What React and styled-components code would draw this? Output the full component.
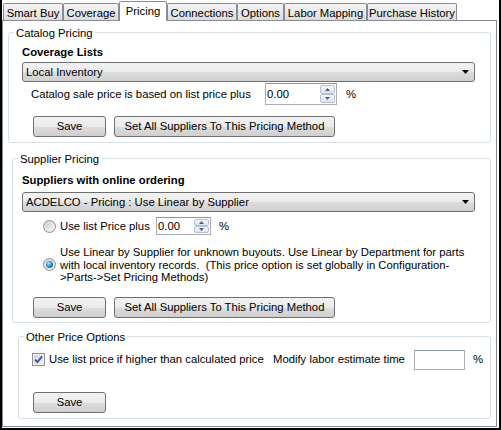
import React from "react";
import styled, { createGlobalStyle } from "styled-components";

const GlobalStyle = createGlobalStyle`
  html, body {
    margin: 0;
    padding: 0;
    background: #fff;
  }
  body {
    font-family: "Liberation Sans", Arial, sans-serif;
    font-size: 11.3px;
    line-height: 13px;
    color: #000;
  }
`;

const tabs = [
  { label: "Smart Buy", w: 60 },
  { label: "Coverage", w: 56 },
  { label: "Pricing", w: 48, active: true },
  { label: "Connections", w: 70 },
  { label: "Options", w: 47 },
  { label: "Labor Mapping", w: 83 },
  { label: "Purchase History", w: 90 },
];

const Frame = styled.div`
  box-sizing: border-box;
  width: 501px;
  height: 430px;
  border: 2px solid #000;
  border-top: none;
  background: #fff;
  display: flex;
  flex-direction: column;
`;

const TabStrip = styled.div`
  display: flex;
  align-items: flex-end;
  height: 20px;
  padding-left: 1px;
  flex-shrink: 0;
`;

const Tab = styled.div`
  box-sizing: border-box;
  width: ${(p) => p.$w}px;
  height: ${(p) => (p.$active ? 20 : 17)}px;
  margin-bottom: ${(p) => (p.$active ? -1 : 0)}px;
  padding-top: 3px;
  border: 1px solid #898c95;
  border-bottom: none;
  border-radius: 2px 2px 0 0;
  background: ${(p) =>
    p.$active ? "#fff" : "linear-gradient(#f4f4f4, #e9e9e9 50%, #dcdcdc)"};
  text-align: center;
  white-space: nowrap;
  position: relative;
  z-index: ${(p) => (p.$active ? 1 : 0)};
`;

const Panel = styled.div`
  box-sizing: border-box;
  width: 495px;
  height: 407px;
  border: 1px solid #898c95;
  background: #fff;
  display: flex;
  flex-direction: column;
`;

const Group = styled.fieldset`
  box-sizing: border-box;
  width: ${(p) => p.$w}px;
  min-width: 0;
  margin: ${(p) => p.$mt}px 0 0 ${(p) => p.$ml}px;
  padding: 0 0 ${(p) => p.$pb}px 0;
  border: 1px solid #d5dfe5;
  border-radius: 3px;
  display: flex;
  flex-direction: column;
  align-items: flex-start;
`;

const Legend = styled.legend`
  margin-left: 5px;
  padding: 2px 2px 0;
  line-height: 13px;
`;

const Heading = styled.div`
  font-weight: bold;
  margin: ${(p) => p.$mt}px 0 0 ${(p) => p.$ml}px;
`;

const Select = styled.div`
  box-sizing: border-box;
  width: 453px;
  height: 20px;
  margin: ${(p) => p.$mt}px 0 0 ${(p) => p.$ml}px;
  padding: 0 5px 0 3px;
  border: 1px solid #707070;
  border-radius: 3px;
  background: linear-gradient(#f2f2f2, #ebebeb 50%, #dddddd 51%, #cfcfcf);
  display: flex;
  align-items: center;
  justify-content: space-between;
`;

const Row = styled.div`
  display: flex;
  align-items: center;
  height: ${(p) => p.$h}px;
  margin: ${(p) => p.$mt}px 0 0 ${(p) => p.$ml}px;
`;

const Label = styled.span`
  width: ${(p) => p.$w}px;
  flex-shrink: 0;
  white-space: nowrap;
`;

const Para = styled.div`
  line-height: 12.5px;
  white-space: nowrap;
`;

const Percent = styled.span`
  margin-left: ${(p) => p.$ml}px;
`;

const NumBox = styled.div`
  box-sizing: border-box;
  width: ${(p) => p.$w}px;
  height: ${(p) => p.$h}px;
  border: 1px solid #abadb3;
  border-top-color: #8f949c;
  background: #fff;
  display: flex;
  align-items: center;
  padding-left: 1px;
`;

const Value = styled.span`
  flex: 1;
`;

const Spin = styled.div`
  width: 15px;
  align-self: stretch;
  display: flex;
  flex-direction: column;
  padding: 1px 1px 1px 0;
`;

const SpinButton = styled.div`
  flex: 1;
  box-sizing: border-box;
  border: 1px solid #b7c1d1;
  border-radius: 2px;
  background: linear-gradient(#f5f7fa, #dfe4ec);
  display: flex;
  align-items: center;
  justify-content: center;
`;

const ButtonRow = styled.div`
  display: flex;
  gap: 8px;
  margin: ${(p) => p.$mt}px 0 0 ${(p) => p.$ml}px;
`;

const Button = styled.div`
  box-sizing: border-box;
  width: ${(p) => p.$w}px;
  height: 21px;
  border: 1px solid #707070;
  border-radius: 3px;
  background: linear-gradient(#f2f2f2, #ebebeb 50%, #dddddd 51%, #cfcfcf);
  display: flex;
  align-items: center;
  justify-content: center;
  white-space: nowrap;
`;

const Radio = styled.span`
  box-sizing: border-box;
  width: 13px;
  height: 13px;
  flex-shrink: 0;
  margin-right: 4px;
  border-radius: 50%;
  border: 1px solid #8e8f8f;
  background: linear-gradient(135deg, #d6d6d6, #f4f4f4);
  display: flex;
  align-items: center;
  justify-content: center;
  &::after {
    content: "";
    width: 7px;
    height: 7px;
    border-radius: 50%;
    background: ${(p) =>
      p.$checked
        ? "radial-gradient(circle at 40% 35%, #b6ecff 0, #3c9ad0 40%, #0d4f80 90%)"
        : "linear-gradient(135deg, #c9c9c9, #f9f9f9)"};
  }
`;

const Check = styled.span`
  box-sizing: border-box;
  width: 13px;
  height: 13px;
  flex-shrink: 0;
  margin-right: 4px;
  border: 1px solid #8e8f8f;
  background: linear-gradient(135deg, #c9d2dd, #f2f5f8);
  box-shadow: inset 0 0 0 1px #f4f4f4;
  display: flex;
  align-items: center;
  justify-content: center;
`;

const Arrow = ({ up }) => (
  <svg width="5" height="3" viewBox="0 0 5 3">
    <polygon
      points={up ? "0,3 5,3 2.5,0" : "0,0 5,0 2.5,3"}
      fill="#4d6087"
    />
  </svg>
);

const NumericInput = ({ w, h, value, spinner }) => (
  <NumBox $w={w} $h={h}>
    <Value>{value}</Value>
    {spinner && (
      <Spin>
        <SpinButton>
          <Arrow up />
        </SpinButton>
        <SpinButton>
          <Arrow />
        </SpinButton>
      </Spin>
    )}
  </NumBox>
);

const Dropdown = ({ mt, ml, children }) => (
  <Select $mt={mt} $ml={ml}>
    <span>{children}</span>
    <svg width="7" height="4" viewBox="0 0 7 4">
      <polygon points="0,0 7,0 3.5,4" fill="#000" />
    </svg>
  </Select>
);

const PricingButtons = ({ mt, ml }) => (
  <ButtonRow $mt={mt} $ml={ml}>
    <Button $w={73}>Save</Button>
    <Button $w={221}>Set All Suppliers To This Pricing Method</Button>
  </ButtonRow>
);

export default function App() {
  return (
    <>
      <GlobalStyle />
      <Frame>
        <TabStrip>
          {tabs.map((t) => (
            <Tab key={t.label} $w={t.w} $active={t.active}>
              {t.label}
            </Tab>
          ))}
        </TabStrip>
        <Panel>
          <Group $w={483} $mt={4} $ml={5} $pb={5}>
            <Legend>Catalog Pricing</Legend>
            <Heading $mt={6} $ml={13}>
              Coverage Lists
            </Heading>
            <Dropdown mt={3} ml={13}>
              Local Inventory
            </Dropdown>
            <Row $h={22} $mt={1} $ml={22}>
              <Label $w={234}>Catalog sale price is based on list price plus</Label>
              <NumericInput w={72} h={22} value="0.00" spinner />
              <Percent $ml={9}>%</Percent>
            </Row>
            <PricingButtons mt={11} ml={24} />
          </Group>

          <Group $w={479} $mt={8} $ml={9} $pb={4}>
            <Legend>Supplier Pricing</Legend>
            <Heading $mt={8} $ml={9}>
              Suppliers with online ordering
            </Heading>
            <Dropdown mt={5} ml={9}>
              ACDELCO - Pricing : Use Linear by Supplier
            </Dropdown>
            <Row $h={18} $mt={5} $ml={30}>
              <Radio />
              <Label $w={96}>Use list Price plus</Label>
              <NumericInput w={55} h={18} value="0.00" spinner />
              <Percent $ml={8}>%</Percent>
            </Row>
            <Row $mt={11} $ml={30}>
              <Radio $checked />
              <Para>
                Use Linear by Supplier for unknown buyouts. Use Linear by Department for parts
                <br />
                with local inventory records.{"\u00a0"} (This price option is set globally in Configuration-
                <br />
                &gt;Parts-&gt;Set Pricing Methods)
              </Para>
            </Row>
            <PricingButtons mt={13} ml={20} />
          </Group>

          <Group $w={473} $mt={6} $ml={15} $pb={5}>
            <Legend>Other Price Options</Legend>
            <Row $h={20} $mt={6} $ml={13}>
              <Check>
                <svg width="9" height="9" viewBox="0 0 9 9">
                  <path
                    d="M1 4.6 L3.4 7.2 L8 1.4"
                    fill="none"
                    stroke="#3b4f94"
                    strokeWidth="1.8"
                  />
                </svg>
              </Check>
              <Label $w={224}>Use list price if higher than calculated price</Label>
              <Label $w={141}>Modify labor estimate time</Label>
              <NumericInput w={51} h={20} value="" />
              <Percent $ml={8}>%</Percent>
            </Row>
            <ButtonRow $mt={22} $ml={14}>
              <Button $w={73}>Save</Button>
            </ButtonRow>
          </Group>
        </Panel>
      </Frame>
    </>
  );
}
